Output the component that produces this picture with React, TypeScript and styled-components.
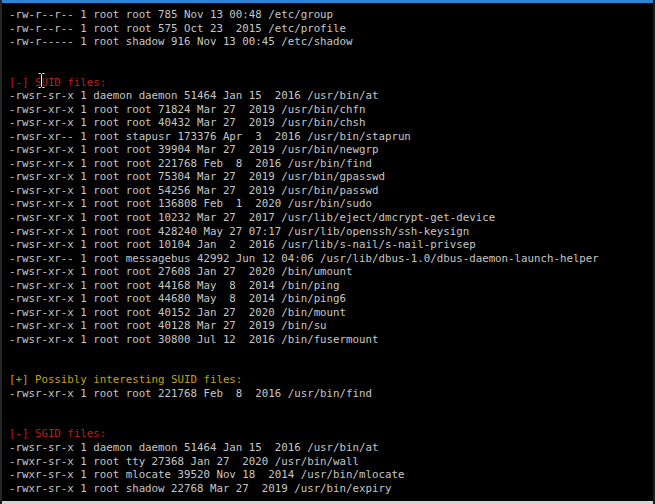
import React from "react";
import styled, { createGlobalStyle } from "styled-components";

const Global = createGlobalStyle`
  html, body { margin: 0; padding: 0; background: #000; }
  body { width: 655px; height: 504px; overflow: hidden; }
`;

const Window = styled.div`
  position: relative;
  width: 655px;
  height: 504px;
  box-sizing: border-box;
  display: flex;
  flex-direction: column;
  background: #000;
  border-left: 2px solid #262626;
  border-right: 2px solid #1c1c1c;
  overflow: hidden;
`;

const TitleStrip = styled.div`
  height: 3px;
  flex: none;
  background: #2a85d6;
`;

const Screen = styled.div`
  flex: 1;
  padding: 5px 0 0 7px;
  font-family: "DejaVu Sans Mono", "Liberation Mono", monospace;
  font-size: 10.78px;
  line-height: 13.54px;
  color: #c6c6c6;
  overflow: hidden;
`;

const Line = styled.div<{ $tone?: "red" | "yellow" }>`
  white-space: pre;
  height: 13.54px;
  color: ${(p) =>
    p.$tone === "red" ? "#c21b1b" : p.$tone === "yellow" ? "#c4a20e" : "#c6c6c6"};
`;

const BottomStrip = styled.div`
  height: 3px;
  flex: none;
  background: #d4d4d4;
`;

const Cursor = styled.svg`
  position: absolute;
  left: 35px;
  top: 72px;
`;

type L = { t: string; tone?: "red" | "yellow" };

const lines: L[] = [
  { t: "-rw-r--r-- 1 root root 785 Nov 13 00:48 /etc/group" },
  { t: "-rw-r--r-- 1 root root 575 Oct 23  2015 /etc/profile" },
  { t: "-rw-r----- 1 root shadow 916 Nov 13 00:45 /etc/shadow" },
  { t: "" },
  { t: "" },
  { t: "[-] SUID files:", tone: "red" },
  { t: "-rwsr-sr-x 1 daemon daemon 51464 Jan 15  2016 /usr/bin/at" },
  { t: "-rwsr-xr-x 1 root root 71824 Mar 27  2019 /usr/bin/chfn" },
  { t: "-rwsr-xr-x 1 root root 40432 Mar 27  2019 /usr/bin/chsh" },
  { t: "-rwsr-xr-- 1 root stapusr 173376 Apr  3  2016 /usr/bin/staprun" },
  { t: "-rwsr-xr-x 1 root root 39904 Mar 27  2019 /usr/bin/newgrp" },
  { t: "-rwsr-xr-x 1 root root 221768 Feb  8  2016 /usr/bin/find" },
  { t: "-rwsr-xr-x 1 root root 75304 Mar 27  2019 /usr/bin/gpasswd" },
  { t: "-rwsr-xr-x 1 root root 54256 Mar 27  2019 /usr/bin/passwd" },
  { t: "-rwsr-xr-x 1 root root 136808 Feb  1  2020 /usr/bin/sudo" },
  { t: "-rwsr-xr-x 1 root root 10232 Mar 27  2017 /usr/lib/eject/dmcrypt-get-device" },
  { t: "-rwsr-xr-x 1 root root 428240 May 27 07:17 /usr/lib/openssh/ssh-keysign" },
  { t: "-rwsr-xr-x 1 root root 10104 Jan  2  2016 /usr/lib/s-nail/s-nail-privsep" },
  { t: "-rwsr-xr-- 1 root messagebus 42992 Jun 12 04:06 /usr/lib/dbus-1.0/dbus-daemon-launch-helper" },
  { t: "-rwsr-xr-x 1 root root 27608 Jan 27  2020 /bin/umount" },
  { t: "-rwsr-xr-x 1 root root 44168 May  8  2014 /bin/ping" },
  { t: "-rwsr-xr-x 1 root root 44680 May  8  2014 /bin/ping6" },
  { t: "-rwsr-xr-x 1 root root 40152 Jan 27  2020 /bin/mount" },
  { t: "-rwsr-xr-x 1 root root 40128 Mar 27  2019 /bin/su" },
  { t: "-rwsr-xr-x 1 root root 30800 Jul 12  2016 /bin/fusermount" },
  { t: "" },
  { t: "" },
  { t: "[+] Possibly interesting SUID files:", tone: "yellow" },
  { t: "-rwsr-xr-x 1 root root 221768 Feb  8  2016 /usr/bin/find" },
  { t: "" },
  { t: "" },
  { t: "[-] SGID files:", tone: "red" },
  { t: "-rwsr-sr-x 1 daemon daemon 51464 Jan 15  2016 /usr/bin/at" },
  { t: "-rwxr-sr-x 1 root tty 27368 Jan 27  2020 /usr/bin/wall" },
  { t: "-rwxr-sr-x 1 root mlocate 39520 Nov 18  2014 /usr/bin/mlocate" },
  { t: "-rwxr-sr-x 1 root shadow 22768 Mar 27  2019 /usr/bin/expiry" },
];

export default function App() {
  return (
    <>
      <Global />
      <Window>
        <TitleStrip />
        <Screen>
          {lines.map((l, i) => (
            <Line key={i} $tone={l.tone}>
              {l.t || " "}
            </Line>
          ))}
        </Screen>
        <BottomStrip />
        <Cursor width="9" height="17" viewBox="0 0 9 17">
          <path
            d="M1.5 1.5h2l1 1 1-1h2M4.5 2.5v12M1.5 15.5h2l1-1 1 1h2"
            stroke="#000"
            strokeWidth="2.2"
            fill="none"
          />
          <path
            d="M1.5 1.5h2l1 1 1-1h2M4.5 2.5v12M1.5 15.5h2l1-1 1 1h2"
            stroke="#f2f2f2"
            strokeWidth="1"
            fill="none"
          />
        </Cursor>
      </Window>
    </>
  );
}
